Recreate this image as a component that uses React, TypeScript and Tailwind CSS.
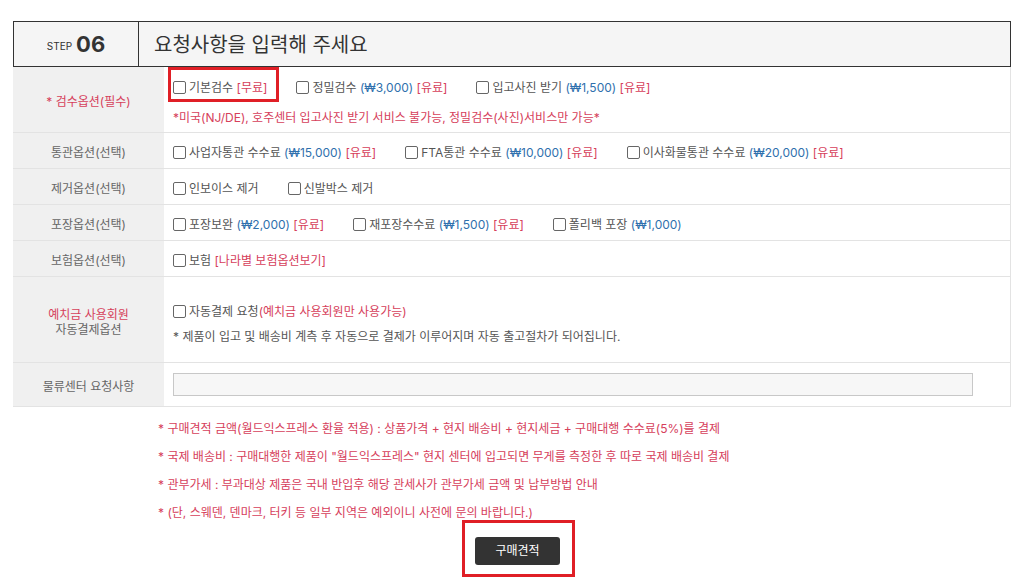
import React from 'react';

type Part = { t: string; c?: 'red' | 'blue' };
type Opt = { parts: Part[]; mark?: boolean };

// 라틴 글자는 Inter (맑은 고딕 숫자 폭과 비슷), 한글은 Noto CJK
const FONT = "font-['Inter','Noto_Sans_CJK_KR',sans-serif]";

function Box() {
  return <span className="inline-block w-[13px] h-[13px] border border-[#666] rounded-[2px] bg-white shrink-0" />;
}

function Text({ parts }: { parts: Part[] }) {
  return (
    <>
      {parts.map((p, i) => (
        <span
          key={i}
          className={p.c === 'red' ? 'text-[#d6405b]' : p.c === 'blue' ? 'text-[#2f70ad]' : 'text-[#555]'}
        >
          {p.t}
        </span>
      ))}
    </>
  );
}

function Option({ opt }: { opt: Opt }) {
  return (
    <label className="relative flex items-center gap-[3px] mr-[29px] whitespace-pre">
      <Box />
      <span>
        <Text parts={opt.parts} />
      </span>
      {opt.mark && (
        <span className="absolute -left-[5px] -right-[12px] -top-[12px] -bottom-[5px] border-[3px] border-[#e01f26] pointer-events-none" />
      )}
    </label>
  );
}

function Row({
  label,
  h,
  pad = 'pt-[4px]',
  children,
}: {
  label: React.ReactNode;
  h: string;
  pad?: string;
  children: React.ReactNode;
}) {
  return (
    <div className={`flex border-b border-[#e3e3e3] ${h}`}>
      <div className="w-[151px] shrink-0 bg-[#f0f0f0] pt-[4px] flex flex-col items-center justify-center text-[#666] text-center leading-[15px]">
        {label}
      </div>
      <div className={`flex-1 pl-[9px] flex flex-col justify-center ${pad}`}>{children}</div>
    </div>
  );
}

const rows: { label: string; h: string; opts: Opt[] }[] = [
  {
    label: '통관옵션(선택)',
    h: 'h-[36px]',
    opts: [
      { parts: [{ t: '사업자통관 수수료 ' }, { t: '(₩15,000) ', c: 'blue' }, { t: '[유료]', c: 'red' }] },
      { parts: [{ t: 'FTA통관 수수료 ' }, { t: '(₩10,000) ', c: 'blue' }, { t: '[유료]', c: 'red' }] },
      { parts: [{ t: '이사화물통관 수수료 ' }, { t: '(₩20,000) ', c: 'blue' }, { t: '[유료]', c: 'red' }] },
    ],
  },
  {
    label: '제거옵션(선택)',
    h: 'h-[36px]',
    opts: [{ parts: [{ t: '인보이스 제거' }] }, { parts: [{ t: '신발박스 제거' }] }],
  },
  {
    label: '포장옵션(선택)',
    h: 'h-[36px]',
    opts: [
      { parts: [{ t: '포장보완 ' }, { t: '(₩2,000) ', c: 'blue' }, { t: '[유료]', c: 'red' }] },
      { parts: [{ t: '재포장수수료 ' }, { t: '(₩1,500) ', c: 'blue' }, { t: '[유료]', c: 'red' }] },
      { parts: [{ t: '폴리백 포장 ' }, { t: '(₩1,000)', c: 'blue' }] },
    ],
  },
  {
    label: '보험옵션(선택)',
    h: 'h-[36px]',
    opts: [{ parts: [{ t: '보험 ' }, { t: '[나라별 보험옵션보기]', c: 'red' }] }],
  },
];

const notes = [
  '* 구매견적 금액(월드익스프레스 환율 적용) : 상품가격 + 현지 배송비 + 현지세금 + 구매대행 수수료(5%)를 결제',
  '* 국제 배송비 : 구매대행한 제품이 "월드익스프레스" 현지 센터에 입고되면 무게를 측정한 후 따로 국제 배송비 결제',
  '* 관부가세 : 부과대상 제품은 국내 반입후 해당 관세사가 관부가세 금액 및 납부방법 안내',
  '* (단, 스웨덴, 덴마크, 터키 등 일부 지역은 예외이니 사전에 문의 바랍니다.)',
];

export default function App() {
  return (
    <div className={`w-[1035px] h-[586px] bg-white overflow-hidden text-[12px] ${FONT}`}>
      <div className="pt-[21px] pl-[13px] w-[1011px]">
        {/* 헤더 */}
        <div className="flex h-[46px] border border-[#333] bg-[#f5f5f5]">
          <div className="w-[125px] shrink-0 border-r border-[#333] flex items-center justify-center gap-[4px] text-[#333]">
            <span className="text-[10px] mt-[4px]">STEP</span>
            <span className="text-[22px] font-bold leading-none">06</span>
          </div>
          <div className="flex items-center pl-[15px] pt-[2px] text-[20px] text-[#333]">요청사항을 입력해 주세요</div>
        </div>

        {/* 옵션 테이블 */}
        <div className="border-r border-[#e3e3e3]">
          <Row label={<span className="text-[#d6405b]">* 검수옵션(필수)</span>} h="h-[66px]" pad="pt-[6px]">
            <div className="flex items-center">
              <Option opt={{ mark: true, parts: [{ t: '기본검수 ' }, { t: '[무료]', c: 'red' }] }} />
              <Option opt={{ parts: [{ t: '정밀검수 ' }, { t: '(₩3,000) ', c: 'blue' }, { t: '[유료]', c: 'red' }] }} />
              <Option opt={{ parts: [{ t: '입고사진 받기 ' }, { t: '(₩1,500) ', c: 'blue' }, { t: '[유료]', c: 'red' }] }} />
            </div>
            <div className="mt-[12px] text-[#d6405b]">
              *미국(NJ/DE), 호주센터 입고사진 받기 서비스 불가능, 정밀검수(사진)서비스만 가능*
            </div>
          </Row>

          {rows.map((r) => (
            <Row key={r.label} label={r.label} h={r.h}>
              <div className="flex items-center">
                {r.opts.map((o, i) => (
                  <Option key={i} opt={o} />
                ))}
              </div>
            </Row>
          ))}

          <Row
            label={
              <>
                <span className="text-[#d6405b]">예치금 사용회원</span>
                <span>자동결제옵션</span>
              </>
            }
            h="h-[86px]"
            pad="pt-[9px]"
          >
            <div className="flex items-center">
              <Option opt={{ parts: [{ t: '자동결제 요청' }, { t: '(예치금 사용회원만 사용가능)', c: 'red' }] }} />
            </div>
            <div className="mt-[7px] text-[#555]">* 제품이 입고 및 배송비 계측 후 자동으로 결제가 이루어지며 자동 출고절차가 되어집니다.</div>
          </Row>

          <Row label="물류센터 요청사항" h="h-[44px]" pad="pt-0">
            <input className="w-[800px] h-[23px] border border-[#c8c8c8] bg-[#f7f7f7] outline-none" />
          </Row>
        </div>
      </div>

      {/* 안내 */}
      <ul className="mt-[8px] pl-[158px] text-[#d6405b]">
        {notes.map((n) => (
          <li key={n} className="h-[28px] leading-[28px]">
            {n}
          </li>
        ))}
      </ul>

      <div className="flex justify-center mt-[10px]">
        <div className="relative">
          <button className="w-[85px] h-[28px] bg-[#333] text-white text-[12px] rounded-[3px]">구매견적</button>
          <span className="absolute -left-[13px] -right-[15px] -top-[17px] -bottom-[12px] border-[3px] border-[#e01f26] pointer-events-none" />
        </div>
      </div>
    </div>
  );
}
